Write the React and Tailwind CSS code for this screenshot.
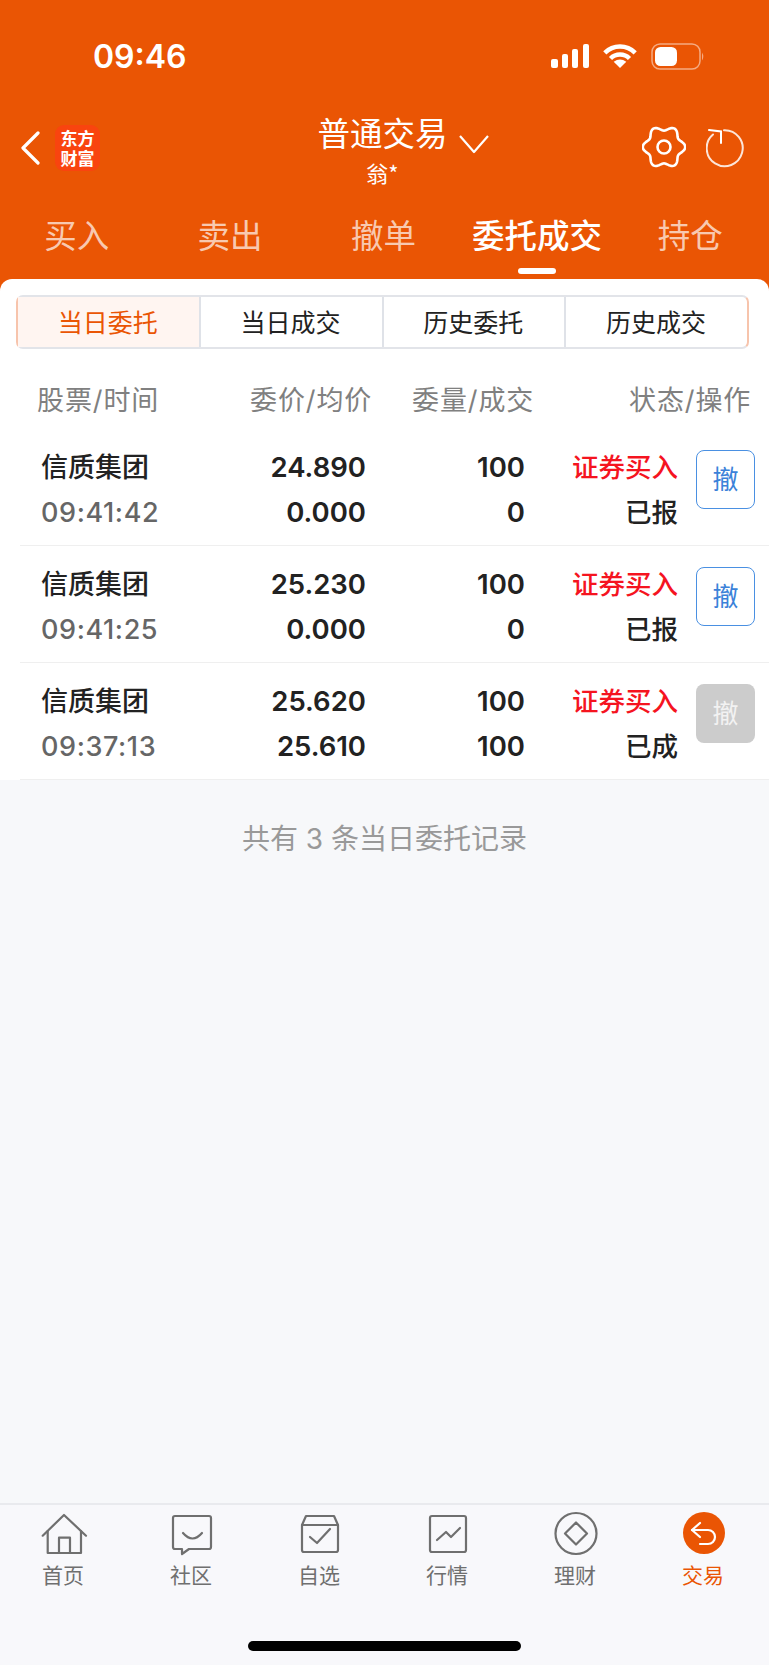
const SANS = 'font-["Inter","Noto_Sans_CJK_SC",sans-serif]';

const tabs = ['买入', '卖出', '撤单', '委托成交', '持仓'];
const segments = ['当日委托', '当日成交', '历史委托', '历史成交'];
const orders = [
  { name: '信质集团', time: '09:41:42', price: '24.890', avg: '0.000', qty: '100', done: '0', status: '已报', canCancel: true },
  { name: '信质集团', time: '09:41:25', price: '25.230', avg: '0.000', qty: '100', done: '0', status: '已报', canCancel: true },
  { name: '信质集团', time: '09:37:13', price: '25.620', avg: '25.610', qty: '100', done: '100', status: '已成', canCancel: false },
];

// scalloped outline for the settings gear
const gearPath = () => {
  const pts = [];
  for (let i = 0; i < 120; i++) {
    const t = (i / 120) * Math.PI * 2;
    const r = 18.8 + 2.4 * Math.cos(6 * t);
    pts.push(`${(22 + r * Math.cos(t)).toFixed(2)} ${(22 + r * Math.sin(t)).toFixed(2)}`);
  }
  return `M${pts.join('L')}Z`;
};

const StatusBar = () => (
  <div className="h-[112px] flex items-start pt-[37px] pl-[93px] pr-[64px] justify-between">
    <span className='text-[32px] leading-[40px] font-semibold text-white font-["Inter",sans-serif]'>09:46</span>
    <div className="flex items-start pt-[7px] gap-[14px]">
      <svg width="38" height="25" viewBox="0 0 38 25" fill="white">
        <rect x="0" y="15" width="7" height="9" rx="2" />
        <rect x="11" y="10" width="6" height="14" rx="2" />
        <rect x="21" y="5" width="6" height="19" rx="2" />
        <rect x="32" y="0" width="6" height="24" rx="2" />
      </svg>
      <svg width="34" height="25" viewBox="0 0 34 25" fill="none" stroke="white" strokeWidth="4.5">
        <path d="M1.8 8.8A21.5 21.5 0 0 1 32.2 8.8" />
        <path d="M7.5 14.5A13.5 13.5 0 0 1 26.5 14.5" />
        <path d="M17 24L10.7 17.7Q17 13.5 23.3 17.7Z" fill="white" stroke="none" />
      </svg>
      <svg width="54" height="27" viewBox="0 0 54 27" fill="none" className="-mt-[1px]">
        <rect x="1" y="1" width="48" height="25" rx="8" stroke="white" strokeOpacity="0.5" strokeWidth="1.5" />
        <rect x="4" y="4" width="22" height="19" rx="5.5" fill="white" />
        <path d="M51 9.5Q53.5 13.5 51 17.5Z" fill="white" fillOpacity="0.5" />
      </svg>
    </div>
  </div>
);

const NavRow = () => (
  <div className="flex items-start h-[86px]">
    <div className="w-[319px] flex items-center pl-[20px] pt-[13px] gap-[15px]">
      <svg width="20" height="34" viewBox="0 0 20 34" fill="none" stroke="white" strokeWidth="3.2" strokeLinecap="round" strokeLinejoin="round">
        <path d="M18 2L3 17L18 32" />
      </svg>
      <div className='w-[45px] h-[46px] shrink-0 rounded-[9px] bg-[#f9440f] flex flex-col items-center justify-center text-white font-bold text-[17px] leading-[20px] font-["Noto_Sans_CJK_SC",sans-serif]'>
        <span>东方</span>
        <span>财富</span>
      </div>
    </div>
    <div className="w-[127px] flex flex-col items-center">
      <span className='text-[32.5px] leading-[40px] whitespace-nowrap text-white font-["Noto_Sans_CJK_SC",sans-serif]'>普通交易</span>
      <span className='mt-[8px] text-[22px] leading-[24px] text-white font-["Noto_Sans_CJK_SC",sans-serif]'>翁*</span>
    </div>
    <svg width="32" height="20" viewBox="0 0 32 20" fill="none" stroke="white" strokeWidth="2.2" strokeLinejoin="round" className="ml-[12px] mt-[22px]">
      <path d="M2 2L16 18L30 2" />
    </svg>
    <div className="ml-auto flex items-start gap-[20px] pr-[23px] pt-[13px]">
      <svg width="44" height="44" viewBox="0 0 44 44" fill="none" stroke="white" strokeWidth="2.6">
        <path d={gearPath()} strokeLinejoin="round" />
        <circle cx="22" cy="22" r="6.5" />
      </svg>
      <svg width="40" height="40" viewBox="0 0 40 40" fill="none" stroke="white" strokeWidth="2" strokeLinecap="round" className="mt-[3px]">
        <path d="M18 2.2A18 18 0 1 1 7 6.5" strokeOpacity="0.85" />
        <path d="M3 2L15 3.5V15" />
      </svg>
    </div>
  </div>
);

const TabBar = () => (
  <div className="flex h-[81px] pr-[2px]">
    {tabs.map((t) => {
      const active = t === '委托成交';
      return (
        <div key={t} className="flex-1 flex flex-col items-center">
          <span className={`text-[32.5px] leading-[42px] mt-[15px] whitespace-nowrap font-["Noto_Sans_CJK_SC",sans-serif] ${active ? 'text-white font-medium' : 'text-white/70'}`}>
            {t}
          </span>
          {active && <span className="mt-[13px] w-[38px] h-[6px] rounded-full bg-white" />}
        </div>
      );
    })}
  </div>
);

const Segments = () => (
  <div className="ml-[16px] mr-[20px] flex h-[54px] border-2 border-y-[#e2e4e9] border-x-[#f7c4ac] rounded-[7px]">
    {segments.map((s, i) => (
      <div
        key={s}
        className={`flex-1 flex items-center justify-center text-[25px] pr-[1px] font-["Noto_Sans_CJK_SC",sans-serif] ${i > 0 ? 'border-l-2 border-[#dfe2e8]' : ''} ${i === 0 ? 'bg-[#fff5f1] text-[#ea5504]' : 'text-[#222]'}`}
      >
        {s}
      </div>
    ))}
  </div>
);

const OrderRow = ({ order }) => (
  <div className="ml-[20px] pl-[21px] h-[117px] border-b border-[#efefef] flex items-start pt-[16px]">
    <div className="w-[191px]">
      <div className="text-[27px] leading-[45px] font-medium text-[#222] whitespace-nowrap">{order.name}</div>
      <div className="text-[27px] leading-[45px] font-medium tracking-[0.6px] text-[#666]">{order.time}</div>
    </div>
    <div className="w-[134px] text-right text-[27.5px] leading-[45px] font-semibold text-[#222]">
      <div>{order.price}</div>
      <div>{order.avg}</div>
    </div>
    <div className="w-[159px] text-right text-[27.5px] leading-[45px] font-semibold text-[#222]">
      <div>{order.qty}</div>
      <div>{order.done}</div>
    </div>
    <div className="w-[153px] text-right text-[26.5px] leading-[45px] font-medium">
      <div className="text-[#f5141f]">证券买入</div>
      <div className="text-[#222]">{order.status}</div>
    </div>
    <div className={`ml-[18px] mt-[5px] w-[59px] h-[59px] rounded-[8px] flex items-center justify-center text-[26px] ${order.canCancel ? 'border border-[#4a90e2] text-[#3b82d9]' : 'bg-[#cccccc] text-[#f2f2f2]'}`}>
      撤
    </div>
  </div>
);

const NAV = [
  {
    label: '首页',
    icon: (
      <>
        <path d="M2.7 22.7L24 2L46 22.7" />
        <path d="M7.7 18V40H41V18" />
        <path d="M19 40V24.7H30V40" />
      </>
    ),
  },
  {
    label: '社区',
    icon: (
      <>
        <path d="M7 3H41A2 2 0 0 1 43 5V34A2 2 0 0 1 41 36H21L14 41V36H7A2 2 0 0 1 5 34V5A2 2 0 0 1 7 3Z" />
        <path d="M15 20Q24.5 31 34 20" />
      </>
    ),
  },
  {
    label: '自选',
    icon: (
      <>
        <path d="M6 12L10 3H38L42 12V37A2 2 0 0 1 40 39H8A2 2 0 0 1 6 37Z" />
        <path d="M6 12H42" />
        <path d="M14 24L21 30L34 16" />
      </>
    ),
  },
  {
    label: '行情',
    icon: (
      <>
        <rect x="6" y="3" width="36" height="36" rx="2" />
        <path d="M13 27L22 19L27 24L36 15" />
      </>
    ),
  },
  {
    label: '理财',
    icon: (
      <>
        <circle cx="24" cy="20.5" r="20.5" />
        <path d="M24 9.5L35 20.5L24 31.5L13 20.5Z" strokeLinejoin="round" />
      </>
    ),
  },
  {
    label: '交易',
    active: true,
    icon: (
      <>
        <circle cx="24" cy="20" r="21" fill="#ea5504" stroke="none" />
        <path d="M20 10L12 17L20 24" stroke="white" />
        <path d="M12 17H28A7 7 0 0 1 28 31H20" stroke="white" />
      </>
    ),
  },
];

const BottomNav = () => (
  <div className='h-[162px] shrink-0 border-t-2 border-[#e9eaee] bg-[#f8f8fb] font-["Noto_Sans_CJK_SC",sans-serif]'>
    <div className="flex pt-[8px] pr-[1px]">
      {NAV.map((item) => (
        <div key={item.label} className="w-[128px] flex flex-col items-center">
          <svg width="48" height="44" viewBox="0 0 48 44" fill="none" stroke="#6f6f6f" strokeWidth="2.2" strokeLinejoin="round" strokeLinecap="round" className="overflow-visible">
            {item.icon}
          </svg>
          <span className={`text-[21px] leading-[28px] mt-[3px] -ml-[2px] ${item.active ? 'text-[#ea5504]' : 'text-[#6f6f6f]'}`}>
            {item.label}
          </span>
        </div>
      ))}
    </div>
    <div className="mt-[53px] mx-auto w-[273px] h-[10px] rounded-full bg-black" />
  </div>
);

export default function App() {
  return (
    <div className={`w-[769px] h-[1665px] flex flex-col bg-[#ea5504] overflow-hidden ${SANS}`}>
      <div className="shrink-0">
        <StatusBar />
        <NavRow />
        <TabBar />
      </div>
      <div className="flex-1 flex flex-col">
        <div className="bg-white rounded-t-[12px] pt-[16px]">
          <Segments />
          <div className="flex h-[72px] items-center pt-[32px] text-[27px] tracking-[0.9px] text-[#808080] whitespace-nowrap">
            <span className="ml-[37px] w-[213px]">股票/时间</span>
            <span className="w-[162px]">委价/均价</span>
            <span className="w-[218px]">委量/成交</span>
            <span className="-ml-[1px]">状态/操作</span>
          </div>
          <div className="pt-[8px]">
            {orders.map((o) => (
              <OrderRow key={o.time} order={o} />
            ))}
          </div>
        </div>
        <div className="flex-1 flex flex-col bg-[#f7f8fa]">
          <div className="flex-1 text-center pt-[41px] text-[28px] leading-[36px] text-[#999]">共有 3 条当日委托记录</div>
          <BottomNav />
        </div>
      </div>
    </div>
  );
}
